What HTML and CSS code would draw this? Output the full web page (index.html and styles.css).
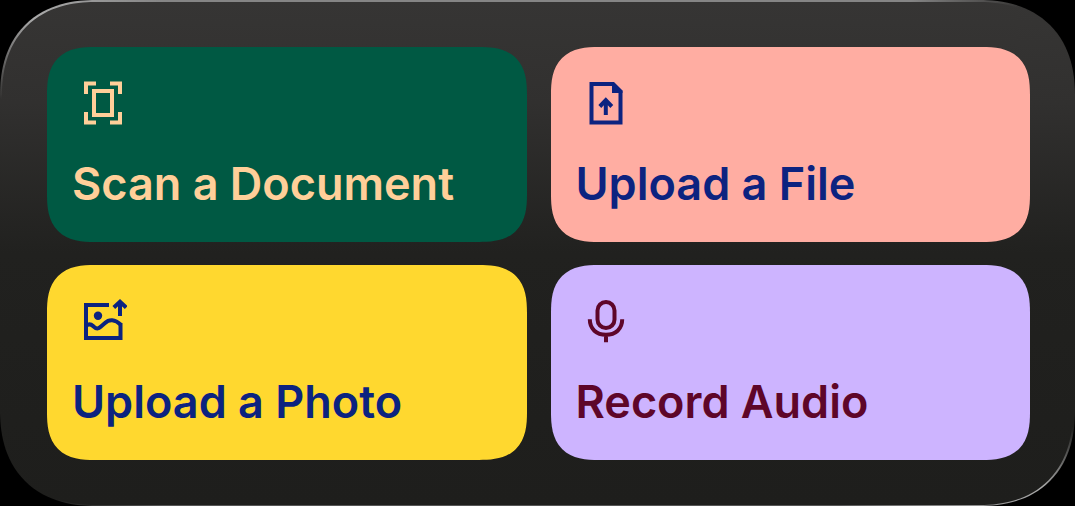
FILE: index.html
```
<!DOCTYPE html>
<html lang="en">
<head>
    <meta charset="UTF-8">
    <meta name="viewport" content="width=device-width, initial-scale=1.0">
    <title>Add Content</title>
    <link rel="stylesheet" href="styles.css">
</head>
<body>
    <main class="panel">
        <button type="button" class="card scan">
            <svg class="icon" viewBox="0 0 48 48" aria-hidden="true">
                <path d="M7 15V4.5H17M31 4.5H41V15M41 33V43.5H31M17 43.5H7V33"/>
                <rect x="15" y="12" width="18" height="24"/>
            </svg>
            <span class="label">Scan a Document</span>
        </button>

        <button type="button" class="card file">
            <svg class="icon" viewBox="0 0 48 48" aria-hidden="true">
                <path d="M30 5H8.5V43.5H37.5V12"/>
                <path class="solid" d="M29 3H31L39.5 11.5V14H29Z"/>
                <path d="M22.8 36V21M16.8 27.5L22.8 21.2L28.8 27.5"/>
            </svg>
            <span class="label">Upload a File</span>
        </button>

        <button type="button" class="card photo">
            <svg class="icon" viewBox="0 0 48 48" aria-hidden="true">
                <path d="M30 8H7V41H41.5V26"/>
                <circle class="solid" cx="19" cy="18.7" r="4.2"/>
                <path d="M7 28.5C10 26.5 12 27 14 29C17 32 19 32.5 22 29.5L26 26C30 22 36 22 41.5 27.5"/>
                <path d="M41 19V5M34.8 10.5L41 4.8L47.2 10.5"/>
            </svg>
            <span class="label">Upload a Photo</span>
        </button>

        <button type="button" class="card audio">
            <svg class="icon" viewBox="0 0 48 48" aria-hidden="true">
                <rect x="14.5" y="5" width="17" height="26" rx="8.5"/>
                <path d="M6.8 22.3C6.8 32 13.5 37.8 23 37.8S39.2 32 39.2 22.3M23 38V45.3"/>
            </svg>
            <span class="label">Record Audio</span>
        </button>
    </main>
</body>
</html>
```
FILE: styles.css
```
* {
    box-sizing: border-box;
}
body {
    margin: 0;
    background-color: #000;
    font-family: Inter, "Liberation Sans", sans-serif;
}
.panel {
    display: grid;
    grid-template-columns: 1fr 1fr;
    gap: 23px 24px;
    padding: 45px 43px 45px 45px;
    border: 2px solid transparent;
    border-bottom-width: 1px;
    border-radius: 84px;
    /* surface, then the light along the rim, then the rim's base colour */
    background:
        linear-gradient(#363534, #31302f 20%, #21211f 50%, #1e1e1c) padding-box,
        conic-gradient(#858585 0deg, #858585 56deg, transparent 63deg, transparent 108deg, #aaa 115deg, #888 121deg, #555 130deg, #555 236deg, transparent 243deg, transparent 286deg, #aaa 295deg, #858585 304deg) border-box,
        linear-gradient(#363534, #31302f 20%, #21211f 50%, #1e1e1c) border-box;
}
.card {
    display: flex;
    flex-direction: column;
    align-items: flex-start;
    gap: 31px;
    padding: 32px 25px;
    border: none;
    border-radius: 38px;
    font-family: inherit;
    text-align: left;
    cursor: pointer;
}
.icon {
    width: 48px;
    height: 48px;
    margin-left: 7px;
    fill: none;
    stroke: currentColor;
    stroke-width: 4;
}
.icon .solid {
    fill: currentColor;
    stroke: none;
}
.label {
    font-size: 45px;
    font-weight: 600;
    line-height: 52px;
}
.scan {
    background-color: #005943;
    color: #ffcf99;
}
.file {
    background-color: #ffada2;
    color: #0c2380;
}
.photo {
    background-color: #ffd82f;
    color: #0c2380;
}
.audio {
    background-color: #cdb4ff;
    color: #5e0629;
}
/* smoother corners where the browser can draw them */
@supports (corner-shape: superellipse(1.4)) {
    .panel {
        border-radius: 96px;
        corner-shape: superellipse(1.2);
    }
    .card {
        border-radius: 48px;
        corner-shape: superellipse(1.4);
    }
}
@media (max-width: 800px) {
    .panel {
        grid-template-columns: 1fr;
    }
}
```
